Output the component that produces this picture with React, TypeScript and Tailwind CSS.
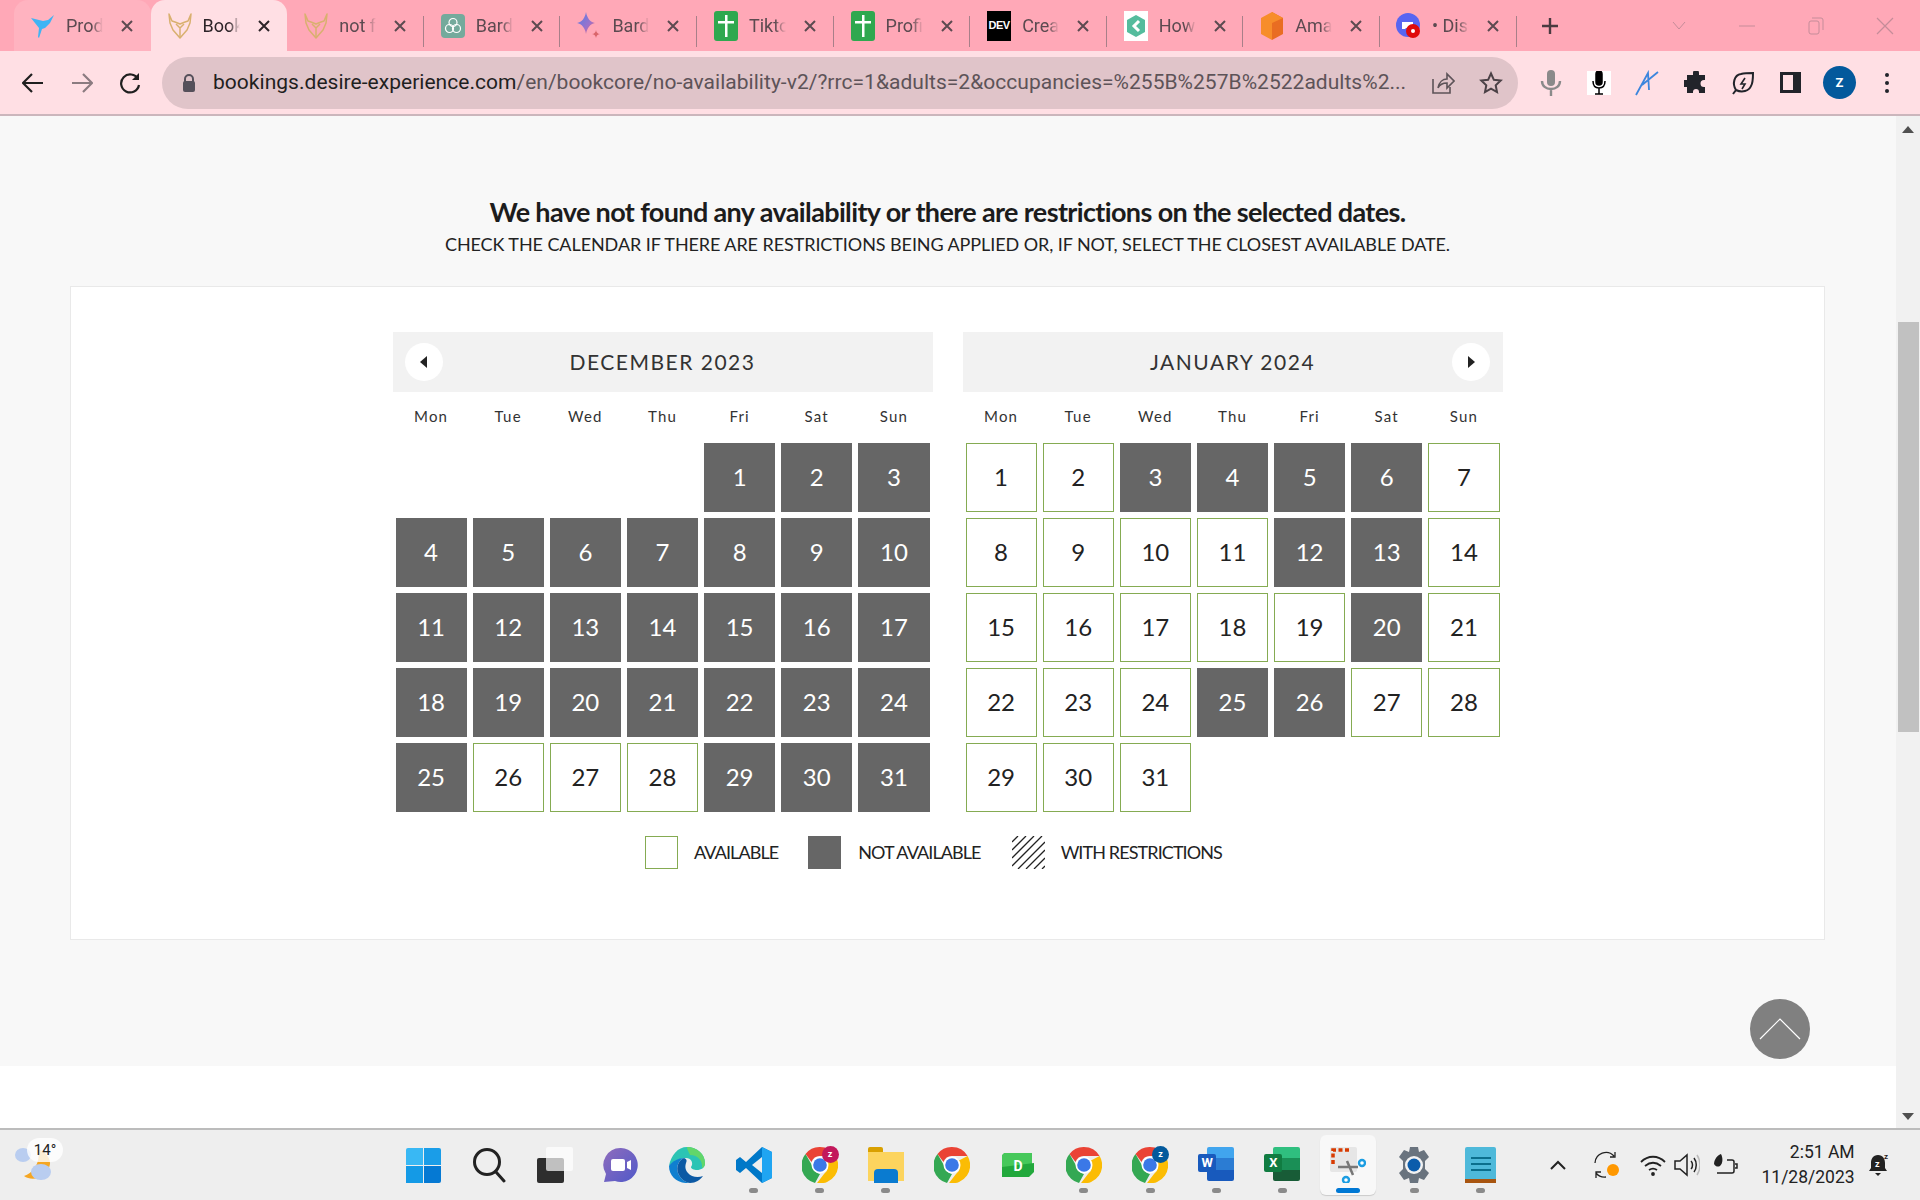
import { ReactNode } from 'react'

const Fox = () => (
  <svg width="26" height="28" viewBox="0 0 26 28" fill="none" stroke="#d9b06f" strokeWidth="1.5" strokeLinejoin="round">
    <path d="M2 2l3 7 3 1 5 2 5-2 3-1 3-7-1 9-3 7-7 8-7-8-3-7z" />
    <path d="M9 12l4 4 4-4M13 16v9" />
  </svg>
)

const Bird = () => (
  <svg width="26" height="26" viewBox="0 0 26 26" fill="#3fb4f4">
    <path d="M1 5l8 2 4 1 5-1 6-5-4 8-5 5-3 1-3 9-1-1 1-9-4-5z" />
  </svg>
)

const Gpt = () => (
  <div className="w-6 h-6 rounded-[4px] bg-[#74aa9c] flex items-center justify-center">
    <svg width="18" height="18" viewBox="0 0 18 18" fill="none" stroke="#fff" strokeWidth="1.2">
      <circle cx="9" cy="5.5" r="4" />
      <circle cx="5.5" cy="11.5" r="4" />
      <circle cx="12.5" cy="11.5" r="4" />
    </svg>
  </div>
)

const Star = () => (
  <svg width="26" height="30" viewBox="0 0 26 30">
    <defs>
      <linearGradient id="bard" x1="0" y1="0" x2="1" y2="1">
        <stop offset="0" stopColor="#4f7fe8" />
        <stop offset="0.6" stopColor="#9b72cb" />
        <stop offset="1" stopColor="#e8636c" />
      </linearGradient>
    </defs>
    <path d="M10 1c1 6 4 10 9 11-5 1-8 5-9 11-1-6-4-10-9-11 5-1 8-5 9-11z" fill="url(#bard)" />
    <path d="M20 19c.4 2.500 1.500 3.800 4 4-2.500.4-3.600 1.500-4 4-.4-2.500-1.500-3.600-4-4 2.500-.2 3.600-1.500 4-4z" fill="#d9656b" />
  </svg>
)

const Sheet = () => (
  <div className="w-6 h-[30px] rounded-[3px] bg-[#2fa84f] flex items-center justify-center">
    <svg width="16" height="22" viewBox="0 0 16 22" fill="#fff">
      <path d="M7 0h2.500v6H16v2.500H9.500V22H7V8.500H0V6h7z" />
    </svg>
  </div>
)

const Dev = () => (
  <div className="w-6 h-[30px] bg-black text-white flex items-center justify-center font-['Liberation_Sans',sans-serif] text-[11px] font-bold tracking-[-0.5px]">
    DEV
  </div>
)

const How = () => (
  <div className="w-6 h-[30px] bg-white flex items-center justify-center">
    <svg width="20" height="24" viewBox="0 0 20 24">
      <path d="M10 1l9 5v12l-9 5-9-5V6z" fill="#55bc9d" />
      <path d="M13 7l-5 5 5 5" fill="none" stroke="#fff" strokeWidth="3" />
    </svg>
  </div>
)

const Cube = () => (
  <svg width="24" height="30" viewBox="0 0 24 30">
    <path d="M12 1l11 6v16l-11 6z" fill="#e96d22" />
    <path d="M12 1L1 7v16l11 6V12l11-5z" fill="#f78d2a" />
  </svg>
)

const Discord = () => (
  <svg width="26" height="28" viewBox="0 0 26 28">
    <circle cx="12" cy="13" r="12" fill="#5865f2" />
    <path d="M6 10h11v7h-3l-1-1h-3l-1 1H6z" fill="#fff" />
    <circle cx="17" cy="19" r="7" fill="#e00b0b" />
    <circle cx="17" cy="19" r="2" fill="#fff" />
  </svg>
)

const tabs: { icon: ReactNode; label: string }[] = [
  { icon: <Bird />, label: 'Product' },
  { icon: <Fox />, label: 'Booking' },
  { icon: <Fox />, label: 'not found' },
  { icon: <Gpt />, label: 'Bard' },
  { icon: <Star />, label: 'Bard' },
  { icon: <Sheet />, label: 'Tiktok' },
  { icon: <Sheet />, label: 'Profile' },
  { icon: <Dev />, label: 'Create' },
  { icon: <How />, label: 'How' },
  { icon: <Cube />, label: 'Amazon' },
  { icon: <Discord />, label: '• Discord' },
]

function Tab({ icon, label, index }: { icon: ReactNode; label: string; index: number }) {
  const active = index === 1
  return (
    <div
      className={
        'w-[136.6px] h-full shrink-0 relative flex items-center pl-[16px] ' +
        (active ? 'bg-[#ffdfe4] rounded-t-[14px] text-[#2d2428]' : index === 0 ? 'bg-[#ffb3c0] rounded-t-[14px] text-[#5c4a50]' : 'text-[#5c4a50]')
      }
    >
      <div className="w-[26px] flex justify-center shrink-0">{icon}</div>
      <div className="ml-[10px] w-[37px] overflow-hidden whitespace-nowrap text-[18px] font-['Roboto',sans-serif] [mask-image:linear-gradient(to_right,black_70%,transparent)]">
        {label}
      </div>
      <svg className="ml-[17px]" width="14" height="14" viewBox="0 0 14 14" stroke="currentColor" strokeWidth="2">
        <path d="M2 2l10 10M12 2L2 12" />
      </svg>
      {index >= 2 && <div className="absolute right-0 top-[16px] h-[31px] w-px bg-[#a87f89]" />}
    </div>
  )
}

function TabStrip() {
  return (
    <div className="h-[51px] bg-[#ffa8b7] flex items-end pl-[14px] shrink-0">
      <div className="flex h-[51px]">
        {tabs.map((t, i) => (
          <Tab key={i} icon={t.icon} label={t.label} index={i} />
        ))}
      </div>
      <div className="h-full flex items-center ml-[23px]">
        <svg width="20" height="20" viewBox="0 0 20 20" stroke="#4a3a40" strokeWidth="2.400">
          <path d="M10 2v16M2 10h16" />
        </svg>
      </div>
      <div className="h-full flex items-center ml-[111px] text-[#c58c99]">
        <svg width="16" height="10" viewBox="0 0 16 10" fill="none" stroke="currentColor">
          <path d="M2 1l6 7 6-7" />
        </svg>
        <svg className="ml-[52px]" width="16" height="2" viewBox="0 0 16 2" stroke="currentColor">
          <path d="M0 1h16" />
        </svg>
        <svg className="ml-[53px]" width="16" height="18" viewBox="0 0 16 18" fill="none" stroke="currentColor">
          <rect x="1" y="4" width="10" height="13" rx="2" />
          <path d="M4 1h9a2 2 0 0 1 2 2v10" />
        </svg>
        <svg className="ml-[52px]" width="18" height="18" viewBox="0 0 18 18" stroke="currentColor" strokeWidth="1.200">
          <path d="M1 1l16 16M17 1L1 17" />
        </svg>
      </div>
    </div>
  )
}

function Toolbar() {
  return (
    <div className="h-[65px] bg-[#ffdfe4] border-b-2 border-[#cbb6bc] flex items-center shrink-0">
      <div className="w-[162px] flex items-center pl-[22px] shrink-0">
        <svg width="22" height="22" viewBox="0 0 22 22" fill="none" stroke="#1f1f1f" strokeWidth="2.200">
          <path d="M21 11H2M10 2l-9 9 9 9" />
        </svg>
        <svg className="ml-[27px]" width="22" height="22" viewBox="0 0 22 22" fill="none" stroke="#8b7b80" strokeWidth="2.200">
          <path d="M1 11h19M12 2l9 9-9 9" />
        </svg>
        <svg className="ml-[26px]" width="22" height="22" viewBox="0 0 22 22" fill="none" stroke="#1f1f1f" strokeWidth="2.200">
          <path d="M19 7a9 9 0 1 0 1 6" />
          <path d="M20 1v7h-7" fill="#1f1f1f" stroke="none" />
        </svg>
      </div>
      <div className="w-[1356px] h-[52px] rounded-full bg-[#e0c4c9] flex items-center pl-[20px] shrink-0">
        <svg width="14" height="18" viewBox="0 0 14 18">
          <path d="M3 8V5a4 4 0 0 1 8 0v3" fill="none" stroke="#55505a" strokeWidth="2" />
          <rect x="1" y="7" width="12" height="11" rx="2" fill="#55505a" />
        </svg>
        <div className="ml-[17px] w-[1196px] whitespace-nowrap overflow-hidden text-[21px] font-['Roboto',sans-serif] text-[#5d5358] tracking-[0.03px]">
          <span className="text-[#1f1f1f]">bookings.desire-experience.com</span>/en/bookcore/no-availability-v2/?rrc=1&amp;adults=2&amp;occupancies=%255B%257B%2522adults%2...
        </div>
        <svg className="ml-[22px]" width="24" height="24" viewBox="0 0 24 24" fill="none" stroke="#5d5358" strokeWidth="1.600">
          <path d="M2 8v14h17v-6M7 17c1-6 5-9 9-9V3l7 7-7 7v-5c-4 0-7 1-9 5z" />
        </svg>
        <svg className="ml-[24px]" width="24" height="24" viewBox="0 0 24 24" fill="none" stroke="#4b4146" strokeWidth="2">
          <path d="M12 2.500l2.900 6.300 6.800.8-5 4.700 1.300 6.800-6-3.400-6 3.400 1.300-6.800-5-4.700 6.800-.8z" />
        </svg>
      </div>
      <div className="flex items-center pl-[21px]">
        <svg width="24" height="28" viewBox="0 0 24 28" fill="none" stroke="#8a8a8a" strokeWidth="2.400">
          <rect x="8" y="1" width="8" height="16" rx="4" fill="#8a8a8a" stroke="none" />
          <path d="M3 12c0 5 4 8 9 8s9-3 9-8M12 20v7" />
        </svg>
        <div className="ml-[24px] w-6 h-6 bg-white flex items-center justify-center">
          <svg width="16" height="24" viewBox="0 0 16 24" fill="none" stroke="#000" strokeWidth="1.500">
            <rect x="5" y="0" width="6" height="14" rx="3" fill="#000" />
            <path d="M2 10c0 4 2 7 6 7s6-3 6-7M8 17v6M4 23h8" />
          </svg>
        </div>
        <svg className="ml-[24px]" width="24" height="26" viewBox="0 0 24 26" fill="none" stroke="#3c86dd" strokeWidth="1.800">
          <path d="M1 25L13 3l1 17M7 15l16-13" />
        </svg>
        <svg className="ml-[25px]" width="24" height="24" viewBox="0 0 24 24" fill="#22242a">
          <path d="M9 2a3 3 0 0 1 6 0v2h6v5h-1a3.500 3.500 0 0 0 0 7h1v6h-6v-1a3 3 0 0 0-6 0v1H3v-6H1a3.500 3.500 0 0 1 0-7h2V4h6z" />
        </svg>
        <svg className="ml-[23px]" width="24" height="24" viewBox="0 0 24 24" fill="none" stroke="#22242a" strokeWidth="2">
          <path d="M2 23l3-4C1 13 3 4 10 3c4-1 9-1 12-1 0 4 0 10-2 13-2 5-9 7-15 4" />
          <path d="M14 7l-4 6h4l-3 5" strokeWidth="1.600" />
        </svg>
        <div className="ml-[25px] w-[21px] h-[21px] border-[3px] border-[#22242a] border-r-[8px] bg-[#ffdfe4]" />
        <div className="ml-[22px] w-[33px] h-[33px] rounded-full bg-[#03599c] text-white text-[13px] font-bold font-['Roboto',sans-serif] flex items-center justify-center">
          Z
        </div>
        <div className="ml-[29px] flex flex-col gap-[4px]">
          <div className="w-[4px] h-[4px] rounded-full bg-[#22242a]" />
          <div className="w-[4px] h-[4px] rounded-full bg-[#22242a]" />
          <div className="w-[4px] h-[4px] rounded-full bg-[#22242a]" />
        </div>
      </div>
    </div>
  )
}

const weekdays = ['Mon', 'Tue', 'Wed', 'Thu', 'Fri', 'Sat', 'Sun']

function Month({
  title,
  blanks,
  free,
  nav,
}: {
  title: string
  blanks: number
  free: number[]
  nav: 'left' | 'right'
}) {
  const days = Array.from({ length: 31 }, (_, i) => i + 1)
  return (
    <div className="w-[540px]">
      <div className="h-[60px] bg-[#f2f2f2] flex items-center justify-between px-[12px]">
        {nav === 'left' ? <NavBtn dir="left" /> : <div className="w-[38px]" />}
        <div className="text-[21px] tracking-[1.5px] text-[#333]">{title}</div>
        {nav === 'right' ? <NavBtn dir="right" /> : <div className="w-[38px]" />}
      </div>
      <div className="grid grid-cols-7 gap-x-[6px] px-[3px] h-[51px] pb-[2px] items-center">
        {weekdays.map((d) => (
          <div key={d} className="text-center text-[15px] tracking-[1.2px] text-[#333]">
            {d}
          </div>
        ))}
      </div>
      <div className="grid grid-cols-7 gap-[6px] px-[3px]">
        {Array.from({ length: blanks }, (_, i) => (
          <div key={i} />
        ))}
        {days.map((d) =>
          free.includes(d) ? (
            <div key={d} className="h-[69px] pb-[2px] border border-[#85ab52] bg-white flex items-center justify-center text-[24px] text-[#222]">
              {d}
            </div>
          ) : (
            <div key={d} className="h-[69px] pb-[2px] bg-[#666666] flex items-center justify-center text-[24px] text-white">
              {d}
            </div>
          ),
        )}
      </div>
    </div>
  )
}

function NavBtn({ dir }: { dir: 'left' | 'right' }) {
  return (
    <div className="w-[38px] h-[38px] rounded-full bg-white flex items-center justify-center">
      <svg width="7" height="12" viewBox="0 0 7 12" fill="#222">
        {dir === 'left' ? <path d="M7 0v12L0 6z" /> : <path d="M0 0v12l7-6z" />}
      </svg>
    </div>
  )
}

function Legend() {
  return (
    <div className="flex items-center justify-center mt-[24px] pr-[28px] text-[18px] tracking-[-0.9px] text-[#222] h-[33px]">
      <div className="w-[33px] h-[33px] border border-[#85ab52] bg-white" />
      <span className="ml-[16px]">AVAILABLE</span>
      <div className="ml-[30px] w-[33px] h-[33px] bg-[#666666]" />
      <span className="ml-[17px]">NOT AVAILABLE</span>
      <svg className="ml-[31px]" width="33" height="33" viewBox="0 0 33 33" stroke="#222" strokeWidth="1.300">
        <path d="M0 6L6 0M0 14L14 0M0 22L22 0M0 30L30 0M6 33L33 6M14 33L33 14M22 33L33 22M30 33l3-3" />
      </svg>
      <span className="ml-[16px]">WITH RESTRICTIONS</span>
    </div>
  )
}

const decFree = [26, 27, 28]
const janFree = [1, 2, 7, 8, 9, 10, 11, 14, 15, 16, 17, 18, 19, 21, 22, 23, 24, 27, 28, 29, 30, 31]

function Page() {
  return (
    <div className="flex-1 relative flex bg-white min-h-0 font-['Lato',sans-serif]">
      <div className="flex-1 min-w-0 flex flex-col">
        <div className="h-[950px] bg-[#f8f8f8] pt-[79px] px-[70px] pr-[71px]">
          <div className="text-center text-[27px] leading-[34px] font-bold text-[#1c1c1c] tracking-[-0.63px]">
            We have not found any availability or there are restrictions on the selected dates.
          </div>
          <div className="text-center text-[18px] leading-[30px] text-[#222] tracking-[-0.08px]">
            CHECK THE CALENDAR IF THERE ARE RESTRICTIONS BEING APPLIED OR, IF NOT, SELECT THE CLOSEST AVAILABLE DATE.
          </div>
          <div className="mt-[27px] h-[654px] bg-white border border-[#e9e9e9] pt-[45px]">
            <div className="flex justify-center gap-[30px]">
              <Month title="DECEMBER 2023" blanks={4} free={decFree} nav="left" />
              <Month title="JANUARY 2024" blanks={0} free={janFree} nav="right" />
            </div>
            <Legend />
          </div>
        </div>
      </div>
      <div className="w-[24px] shrink-0 bg-[#f1f1f1] flex flex-col items-center">
        <svg className="mt-[10px]" width="12" height="7" viewBox="0 0 12 7" fill="#505050">
          <path d="M6 0l6 7H0z" />
        </svg>
        <div className="mt-[189px] w-[21px] h-[410px] bg-[#c1c1c1]" />
        <div className="flex-1" />
        <svg className="mb-[8px]" width="12" height="7" viewBox="0 0 12 7" fill="#505050">
          <path d="M6 7l6-7H0z" />
        </svg>
      </div>
      <div className="absolute left-[1750px] top-[883px] w-[60px] h-[60px] rounded-full bg-[#808080] flex items-center justify-center">
        <svg width="42" height="22" viewBox="0 0 42 22" fill="none" stroke="#fff" strokeWidth="1.200">
          <path d="M1 21L21 1l20 20" />
        </svg>
      </div>
    </div>
  )
}

const Chrome = () => (
  <svg width="36" height="36" viewBox="0 0 36 36">
    <path d="M18 0a18 18 0 0 1 15.600 9H18a9 9 0 0 0-8.500 6L3.500 7A18 18 0 0 1 18 0z" fill="#ea4335" />
    <path d="M3.500 7l8 14a9 9 0 0 0 6.500 6l-5 9A18 18 0 0 1 3.500 7z" fill="#34a853" />
    <path d="M33.600 9A18 18 0 0 1 15 36l7-9a9 9 0 0 0 4-6 9 9 0 0 0-2-7z" fill="#fbbc04" />
    <circle cx="18" cy="18" r="8.500" fill="#fff" />
    <circle cx="18" cy="18" r="6.800" fill="#3b78e7" />
  </svg>
)

function ChromeZ({ bg }: { bg: string }) {
  return (
    <div className="relative w-9 h-9">
      <Chrome />
      <div className={'absolute -right-[1px] -top-[1px] w-[17px] h-[17px] rounded-full text-white text-[9px] font-bold flex items-center justify-center ' + bg}>
        z
      </div>
    </div>
  )
}

const taskIcons: { icon: ReactNode; dot?: boolean; active?: boolean }[] = [
  {
    icon: (
      <div className="grid grid-cols-2 gap-[1px] w-[35px] h-[35px]">
        <div className="bg-[#39b8f4] rounded-tl-[2px]" />
        <div className="bg-[#1a9de8] rounded-tr-[2px]" />
        <div className="bg-[#149ae6]" />
        <div className="bg-[#0579d3] rounded-br-[2px]" />
      </div>
    ),
  },
  {
    icon: (
      <svg width="34" height="36" viewBox="0 0 34 36" fill="none" stroke="#222" strokeWidth="3">
        <circle cx="15" cy="15" r="12.500" />
        <path d="M24 25l8 9" strokeLinecap="round" />
      </svg>
    ),
  },
  {
    icon: (
      <div className="relative w-[36px] h-[36px]">
        <div className="absolute left-0 bottom-0 w-[27px] h-[25px] rounded-[2px] bg-[#2e2e2e]" />
        <div className="absolute right-0 top-0 w-[27px] h-[24px] rounded-[2px] bg-white/70" />
      </div>
    ),
  },
  {
    icon: (
      <svg width="36" height="36" viewBox="0 0 36 36">
        <defs>
          <linearGradient id="chat" x1="0" y1="0" x2="1" y2="1">
            <stop offset="0" stopColor="#8f6cbc" />
            <stop offset="1" stopColor="#5059c9" />
          </linearGradient>
        </defs>
        <path d="M18 1a17 17 0 1 1-6 33L1 35l2-8A17 17 0 0 1 18 1z" fill="url(#chat)" />
        <rect x="8" y="12" width="14" height="12" rx="2" fill="#fff" />
        <path d="M24 15l4-2v10l-4-2z" fill="#fff" />
      </svg>
    ),
  },
  {
    icon: (
      <svg width="36" height="36" viewBox="0 0 36 36">
        <path d="M18 0c10 0 18 7 18 16 0 5-4 7-8 7-3 0-6-1-6-3 3-4 0-9-5-9-7 0-13 4-17 8C2 8 9 0 18 0z" fill="#2cc4b4" />
        <path d="M18 0c10 0 18 7 18 16 0 3-1 4-3 5 1-7-4-13-12-13-2-4-3-6-3-8z" fill="#62d66a" />
        <path d="M0 19c3-5 10-8 15-8-6 3-8 9-6 15 2 5 6 9 12 10C9 37 0 30 0 19z" fill="#0f7fd0" />
        <path d="M15 11c-6 3-8 9-6 15 2 5 6 9 12 10 6 0 10-3 13-7-5 2-12 1-15-3-3-3-3-7-2-10 1-2 1-4-2-5z" fill="#0c59a4" />
      </svg>
    ),
  },
  {
    dot: true,
    icon: (
      <svg width="36" height="36" viewBox="0 0 36 36">
        <path d="M26 0l10 5v26l-10 5L10 21l-6 5-4-3V13l4-3 6 5z" fill="#0078c8" />
        <path d="M26 0l10 5v26l-10 5z" fill="#1fa5f2" />
        <path d="M26 10v16l-10-8z" fill="#eeeeee" />
      </svg>
    ),
  },
  { dot: true, icon: <ChromeZ bg="bg-[#c2185b]" /> },
  {
    dot: true,
    icon: (
      <div className="relative w-9 h-9">
        <div className="absolute left-0 top-0 w-[15px] h-[8px] rounded-t-[2px] bg-[#d9a000]" />
        <div className="absolute left-0 top-[5px] w-full h-[29px] bg-[#fcd45e]" />
        <div className="absolute left-[6px] top-[22px] w-[24px] h-[14px] rounded-t-[4px] bg-[#0a7bd0]" />
      </div>
    ),
  },
  { icon: <Chrome /> },
  {
    icon: (
      <svg width="32" height="24" viewBox="0 0 32 24">
        <path d="M2 0h28v19l-5 5H0V2z" fill="#46c85a" />
        <path d="M0 14l32-4v9l-5 5H0z" fill="#22a83c" />
        <text x="16" y="18" textAnchor="middle" fontSize="14" fontWeight="700" fill="#fff" fontFamily="Roboto, sans-serif">
          D
        </text>
      </svg>
    ),
  },
  { dot: true, icon: <Chrome /> },
  { dot: true, icon: <ChromeZ bg="bg-[#03599c]" /> },
  {
    dot: true,
    icon: (
      <div className="relative w-9 h-9">
        <div className="absolute right-0 top-0 w-[27px] h-[34px] grid grid-rows-3 rounded-[2px] overflow-hidden">
          <div className="bg-[#41a5ee]" />
          <div className="bg-[#2b7cd3]" />
          <div className="bg-[#185abd]" />
        </div>
        <div className="absolute left-0 top-[7px] w-[18px] h-[18px] rounded-[2px] bg-[#185abd] text-white text-[13px] font-bold flex items-center justify-center">
          W
        </div>
      </div>
    ),
  },
  {
    dot: true,
    icon: (
      <div className="relative w-9 h-9">
        <div className="absolute right-0 top-0 w-[27px] h-[34px] grid grid-rows-3 rounded-[2px] overflow-hidden">
          <div className="bg-[#2fbf7f]" />
          <div className="bg-[#1a8f56]" />
          <div className="bg-[#185c37]" />
        </div>
        <div className="absolute left-0 top-[7px] w-[18px] h-[18px] rounded-[2px] bg-[#107c41] text-white text-[13px] font-bold flex items-center justify-center">
          X
        </div>
      </div>
    ),
  },
  {
    active: true,
    icon: (
      <svg width="36" height="36" viewBox="0 0 36 36" fill="none">
        <rect x="0" y="0" width="27" height="25" rx="2" fill="#e6e6e6" />
        <path d="M3 17V3h18" stroke="#d83b01" strokeWidth="3.500" strokeDasharray="4 2.500" />
        <path d="M8 20h20M17 14l6 14" stroke="#777" strokeWidth="2.500" />
        <circle cx="32" cy="16" r="3" stroke="#1b9de2" strokeWidth="2.400" fill="#fff" />
        <circle cx="16" cy="33" r="3" stroke="#1b9de2" strokeWidth="2.400" fill="#fff" />
      </svg>
    ),
  },
  {
    dot: true,
    icon: (
      <svg width="36" height="36" viewBox="0 0 36 36">
        <path d="M14 0h8l1 5 5-2 5 7-4 4v8l4 4-5 7-5-2-1 5h-8l-1-5-5 2-5-7 4-4v-8L3 10l5-7 5 2z" fill="#69737e" />
        <circle cx="18" cy="18" r="9" fill="#f2f2f2" />
        <circle cx="18" cy="18" r="6.500" fill="#0b5cab" />
      </svg>
    ),
  },
  {
    dot: true,
    icon: (
      <div className="relative w-[31px] h-9 rounded-t-[2px] bg-[#4eb9da] flex flex-col items-center pt-[10px] gap-[4px] border-b-[4px] border-[#a85510]">
        <div className="w-[20px] h-[2px] bg-[#0b6f8d]" />
        <div className="w-[20px] h-[2px] bg-[#0b6f8d]" />
        <div className="w-[20px] h-[2px] bg-[#0b6f8d]" />
      </div>
    ),
  },
]

function Taskbar() {
  return (
    <div className="h-[72px] bg-[#eeeeee] border-t-2 border-[#bcbcbc] flex font-['Roboto',sans-serif] shrink-0 relative">
      <div className="w-[390px] shrink-0 relative">
        <svg className="absolute left-[14px] top-[15px]" width="38" height="36" viewBox="0 0 38 36">
          <path d="M24 4c3 12-4 24-14 27 8 6 24 2 26-12 .5-6-5-13-12-15z" fill="#f5a623" />
          <ellipse cx="9" cy="10" rx="8" ry="7" fill="#b9cdf0" />
          <ellipse cx="27" cy="27" rx="10" ry="8" fill="#b9cdf0" />
        </svg>
        <div className="absolute left-[27px] top-[8px] w-[36px] h-[24px] rounded-full bg-white/80 flex items-center justify-center text-[15px] text-[#222]">
          14°
        </div>
      </div>
      <div className="flex">
        {taskIcons.map((t, i) => (
          <div key={i} className="w-[66.1px] h-full flex items-center justify-center relative">
            {t.active && <div className="absolute inset-x-[5px] top-[5px] bottom-[5px] rounded-[6px] bg-[#f8f8f8] shadow-[0_1px_1px_rgba(0,0,0,0.15)]" />}
            <div className="relative h-9 flex items-center justify-center">{t.icon}</div>
            {t.dot && <div className="absolute bottom-[7px] w-[9px] h-[5px] rounded-full bg-[#8a8a8a]" />}
            {t.active && <div className="absolute bottom-[7px] w-[24px] h-[5px] rounded-full bg-[#0078d4]" />}
          </div>
        ))}
      </div>
      <div className="flex-1 flex items-center">
        <svg className="ml-[36px]" width="16" height="10" viewBox="0 0 16 10" fill="none" stroke="#222" strokeWidth="2">
          <path d="M1 9l7-7 7 7" />
        </svg>
        <svg className="ml-[28px]" width="26" height="28" viewBox="0 0 26 28" fill="none" stroke="#222" strokeWidth="1.300">
          <path d="M1 12A11 11 0 0 1 20 5M21 1v5h-5M2 22a11 11 0 0 0 10 4M2 27v-6h5" />
          <circle cx="19" cy="19" r="6" fill="#ff9800" stroke="none" />
        </svg>
        <svg className="ml-[20px]" width="26" height="22" viewBox="0 0 26 22" fill="none" stroke="#222" strokeWidth="1.800">
          <path d="M1 8c7-7 17-7 24 0M5 12c5-4 11-4 16 0M9 16c3-2 5-2 8 0" />
          <circle cx="13" cy="20" r="1" fill="#222" />
        </svg>
        <svg className="ml-[8px]" width="26" height="24" viewBox="0 0 26 24" fill="none" stroke="#222" strokeWidth="1.500">
          <path d="M1 8v8h5l7 6V2L6 8zM17 8c2 2 2 6 0 8M20 5c3 4 3 10 0 14" />
          <path d="M23 2c4 6 4 14 0 20" stroke="#bbb" />
        </svg>
        <svg className="ml-[13px]" width="26" height="24" viewBox="0 0 26 24" fill="none" stroke="#222" strokeWidth="1.500">
          <path d="M4 20h15a2 2 0 0 0 2-2V9a2 2 0 0 0-2-2h-5M22 11h2v4h-2" />
          <path d="M1 11c0-5 4-9 7-10 2 4 2 9-1 12-2 1-4 1-6-2z" fill="#222" stroke="none" />
        </svg>
        <div className="ml-[20px] w-[96px] text-right text-[#222] text-[17.5px] leading-[25px]">
          <div>2:51 AM</div>
          <div className="whitespace-nowrap">11/28/2023</div>
        </div>
        <svg className="ml-[13px]" width="22" height="26" viewBox="0 0 22 26">
          <path d="M10 3c5 0 7 4 7 8v5l2 3H1l2-3v-5c0-4 2-8 7-8z" fill="#222" />
          <path d="M7 21h6l-3 3z" fill="#222" />
          <text x="16" y="7" fontSize="8" fontWeight="700" fill="#222" fontFamily="Roboto, sans-serif">
            z
          </text>
          <text x="7" y="15" fontSize="9" fontWeight="700" fill="#fff" fontFamily="Roboto, sans-serif">
            z
          </text>
        </svg>
      </div>
    </div>
  )
}

export default function App() {
  return (
    <div className="w-full h-screen flex flex-col overflow-hidden">
      <TabStrip />
      <Toolbar />
      <Page />
      <Taskbar />
    </div>
  )
}
